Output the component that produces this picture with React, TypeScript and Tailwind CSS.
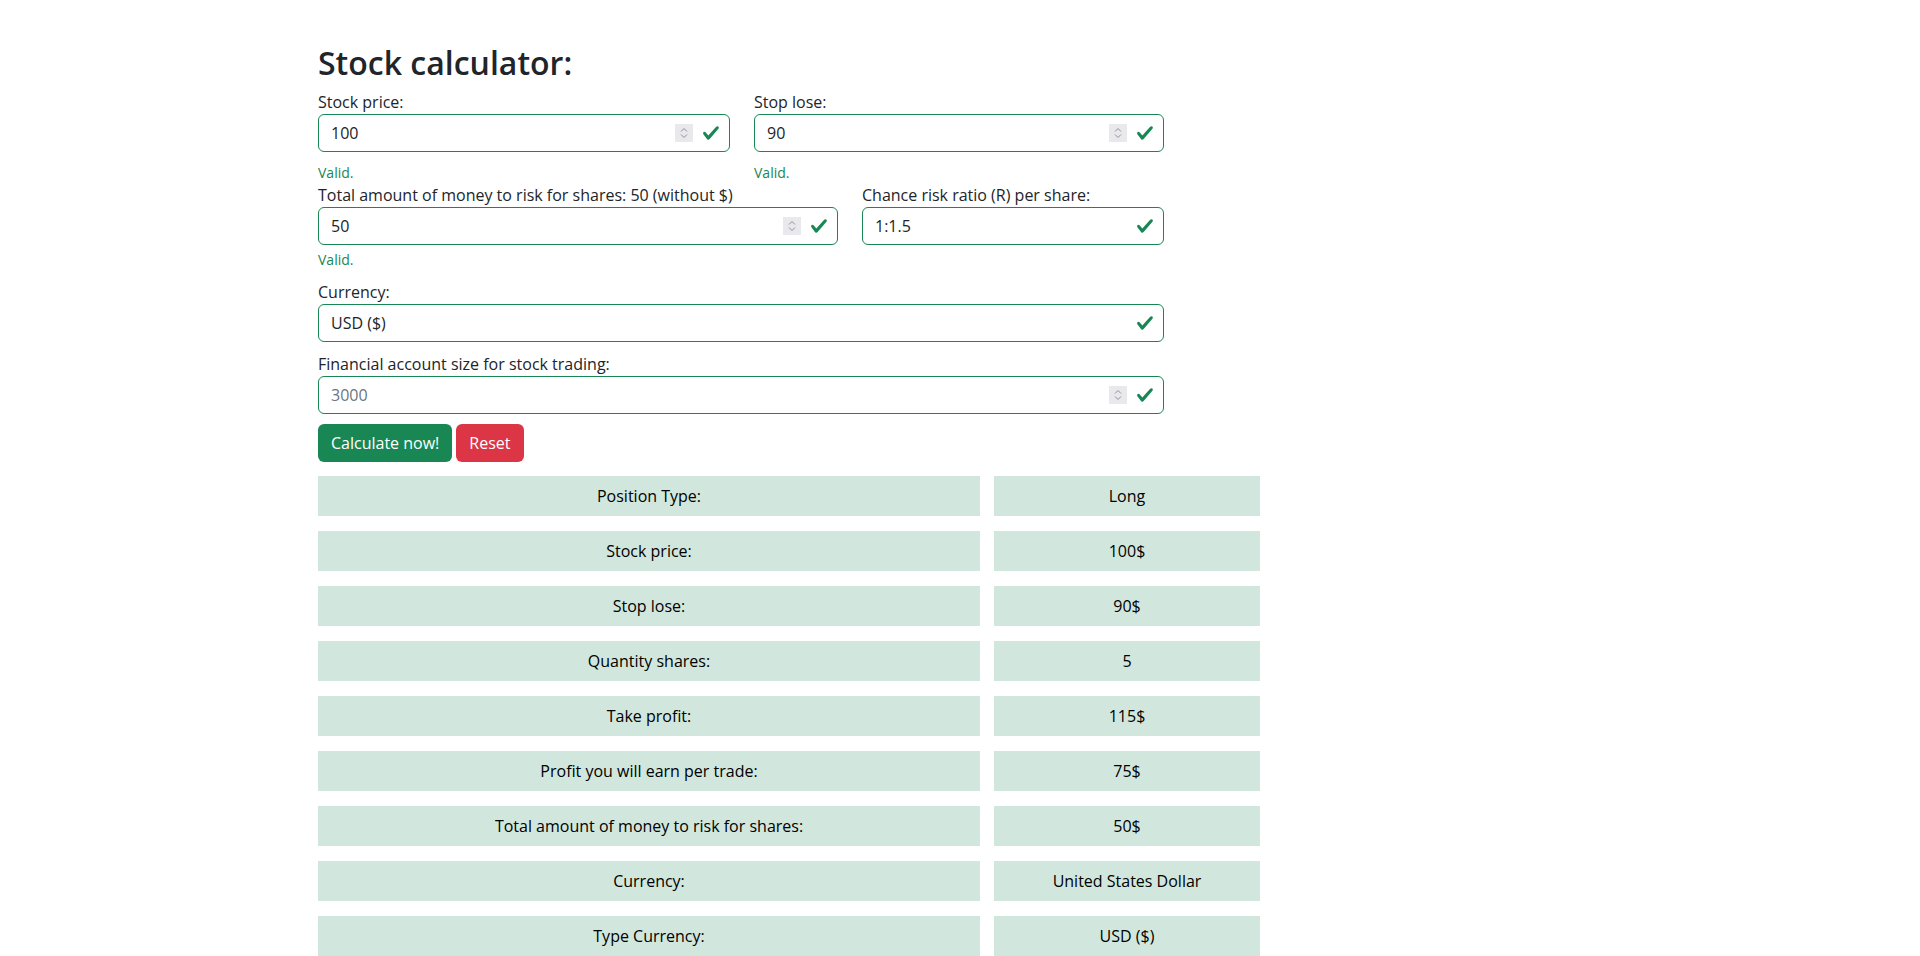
import React from "react";

const GREEN = "#198754";

function Check() {
  return (
    <svg viewBox="0 0 8 8" className="w-[18px] h-[18px]">
      <path
        fill={GREEN}
        d="M2.3 6.73.6 4.53c-.4-1.04.46-1.4 1.1-.8l1.1 1.4 3.4-3.8c.6-.63 1.6-.27 1.2.7l-4 4.6c-.43.5-.8.4-1.1.1z"
      />
    </svg>
  );
}

function Spinner() {
  return (
    <svg viewBox="0 0 18 18" className="w-[18px] h-[18px]">
      <rect x="0" y="0" width="18" height="18" fill="#e9e9ed" />
      <path d="M6 7.5 9 4.5l3 3" fill="none" stroke="#8f8f9d" strokeWidth="1" />
      <path d="M6 10.5 9 13.5l3-3" fill="none" stroke="#8f8f9d" strokeWidth="1" />
    </svg>
  );
}

type FieldProps = {
  label: string;
  value?: string;
  placeholder?: string;
  spinner?: boolean;
  valid?: "far" | "near";
  className?: string;
};

function Field({ label, value, placeholder, spinner, valid, className }: FieldProps) {
  return (
    <div className={className}>
      <label className="block h-6 leading-6">{label}</label>
      <div className="relative h-[38px] border border-[#198754] rounded-[6px]">
        <input
          type="text"
          defaultValue={value}
          placeholder={placeholder}
          className="w-full h-full pl-3 pr-[54px] bg-transparent outline-none text-[16px] text-[#212529] placeholder:text-[#6c757d]"
        />
        {spinner && (
          <div className="absolute right-[36px] top-1/2 -translate-y-1/2 flex">
            <Spinner />
          </div>
        )}
        <div className="absolute right-[9px] top-1/2 -translate-y-1/2 flex">
          <Check />
        </div>
      </div>
      {valid && (
        <div
          className={
            "text-[14px] leading-[21px] text-[#198754] " +
            (valid === "far" ? "mt-[10px]" : "mt-1")
          }
        >
          Valid.
        </div>
      )}
    </div>
  );
}

const results: [string, string][] = [
  ["Position Type:", "Long"],
  ["Stock price:", "100$"],
  ["Stop lose:", "90$"],
  ["Quantity shares:", "5"],
  ["Take profit:", "115$"],
  ["Profit you will earn per trade:", "75$"],
  ["Total amount of money to risk for shares:", "50$"],
  ["Currency:", "United States Dollar"],
  ["Type Currency:", "USD ($)"],
  ["Financial account size:", "3000$"],
  ["Risk from account per trade:", "1.67%"],
];

export default function App() {
  return (
    <div
      className="h-screen overflow-y-scroll bg-white text-[#212529] text-[16px] leading-6 [&::-webkit-scrollbar]:w-[17px] [&::-webkit-scrollbar-track]:bg-[#f1f1f1] [&::-webkit-scrollbar-thumb]:bg-[#cdcdcd]"
      style={{ fontFamily: '"Open Sans", "Noto Sans", sans-serif' }}
    >
      <div className="pt-[44px] pb-[24px] pl-[318px]">
        <h2 className="text-[32px] leading-[1.2] font-semibold mb-2">Stock calculator:</h2>

        <div className="w-[846px]">
          <div className="flex gap-6">
            <Field className="w-[412px]" label="Stock price:" value="100" spinner valid="far" />
            <Field className="w-[410px]" label="Stop lose:" value="90" spinner valid="far" />
          </div>

          <div className="flex gap-6">
            <Field
              className="w-[520px]"
              label="Total amount of money to risk for shares: 50 (without $)"
              value="50"
              spinner
              valid="near"
            />
            <Field className="w-[302px]" label="Chance risk ratio (R) per share:" value="1:1.5" />
          </div>

          <Field className="mt-[10px]" label="Currency:" value="USD ($)" />
          <Field className="mt-[10px]" label="Financial account size for stock trading:" placeholder="3000" spinner />

          <div className="flex gap-1 mt-[10px]">
            <button className="h-[38px] px-[13px] rounded-[6px] bg-[#198754] text-white">Calculate now!</button>
            <button className="h-[38px] px-[13px] rounded-[6px] bg-[#dc3545] text-white">Reset</button>
          </div>
        </div>

        <div className="mt-[14px] flex flex-col gap-[15px] w-[942px]">
          {results.map(([k, v]) => (
            <div key={k} className="grid grid-cols-[662px_266px] gap-[14px]">
              <div className="h-10 flex items-center justify-center bg-[#d1e7dd] text-black">{k}</div>
              <div className="h-10 flex items-center justify-center bg-[#d1e7dd] text-black">{v}</div>
            </div>
          ))}
        </div>
      </div>
    </div>
  );
}
